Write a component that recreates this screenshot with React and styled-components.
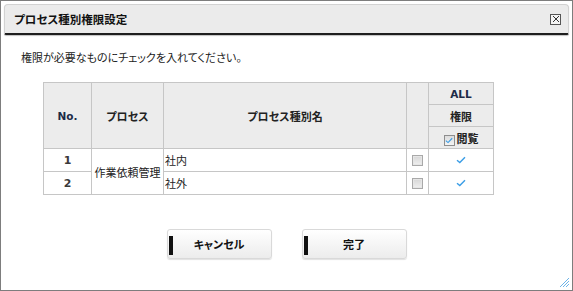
import React from "react"
import styled, { createGlobalStyle } from "styled-components"

const GlobalStyle = createGlobalStyle`
  html, body {
    margin: 0;
    padding: 0;
    background: #ffffff;
  }
  body {
    font-family: "Liberation Sans", "Noto Sans CJK JP", sans-serif;
    font-size: 11px;
    color: #222;
  }
`

const rows = [
  { no: 1, name: "社内" },
  { no: 2, name: "社外" },
]

const Check = () => (
  <svg width="10" height="8" viewBox="0 0 10 8">
    <path d="M1 4.2 L3.8 6.6 L9 1.2" fill="none" stroke="#3a9de6" strokeWidth="1.4" />
  </svg>
)

const App = () => {
  return (
    <>
      <GlobalStyle />
      <Window>
        <TitleBar>
          <Title>プロセス種別権限設定</Title>
          <CloseBox>
            <svg width="8" height="8" viewBox="0 0 8 8">
              <path d="M1 1 L7 7 M7 1 L1 7" stroke="#333" strokeWidth="1" />
            </svg>
          </CloseBox>
        </TitleBar>

        <Message>権限が必要なものにチェックを入れてください。</Message>

        <Table>
          <colgroup>
            <col style={{ width: 48 }} />
            <col style={{ width: 72 }} />
            <col style={{ width: 243 }} />
            <col style={{ width: 22 }} />
            <col style={{ width: 65 }} />
          </colgroup>
          <thead>
            <tr>
              <Th rowSpan={3} latin>No.</Th>
              <Th rowSpan={3}>プロセス</Th>
              <Th rowSpan={3}>プロセス種別名</Th>
              <Th rowSpan={3}></Th>
              <Th latin>ALL</Th>
            </tr>
            <tr>
              <Th>権限</Th>
            </tr>
            <tr>
              <Th>
                <HeadCheck>
                  <Check />
                </HeadCheck>
                閲覧
              </Th>
            </tr>
          </thead>
          <tbody>
            {rows.map((row, i) => (
              <tr key={row.no}>
                <Td center latin>{row.no}</Td>
                {i === 0 && <Td rowSpan={2} center>作業依頼管理</Td>}
                <Td>{row.name}</Td>
                <Td center>
                  <GrayBox />
                </Td>
                <Td center>
                  <Check />
                </Td>
              </tr>
            ))}
          </tbody>
        </Table>

        <Buttons>
          <Button>キャンセル</Button>
          <Button>完了</Button>
        </Buttons>

        <Grip>
          <svg width="11" height="11" viewBox="0 0 11 11">
            <path d="M1 10 L10 1 M4 10 L10 4 M7 10 L10 7" stroke="#6db4e8" strokeWidth="1" />
          </svg>
        </Grip>
      </Window>
    </>
  )
}

export default App

const Window = styled.div`
  position: relative;
  box-sizing: border-box;
  width: 573px;
  height: 291px;
  border: 1px solid #7d7d7d;
  background: #fff;
  padding: 3px 3px 0 3px;
`

const TitleBar = styled.div`
  display: flex;
  align-items: center;
  justify-content: space-between;
  box-sizing: border-box;
  height: 31px;
  padding: 0 7px 0 9px;
  background: #ebebeb;
  border: 1px solid #d2d2d2;
  border-bottom: 2px solid #1e1e1e;
  border-radius: 4px 4px 2px 2px;
  box-shadow: 0 1px 1px rgba(0, 0, 0, 0.25);
`

const Title = styled.div`
  font-family: "Noto Sans CJK JP", sans-serif;
  font-feature-settings: "palt";
  font-weight: bold;
  font-size: 11.5px;
  color: #111;
`

const CloseBox = styled.div`
  display: flex;
  align-items: center;
  justify-content: center;
  box-sizing: border-box;
  width: 11px;
  height: 11px;
  border: 1px solid #555;
  background: #f4f4f4;
`

const Message = styled.div`
  font-family: "Noto Sans CJK JP", sans-serif;
  font-feature-settings: "palt";
  font-size: 11px;
  color: #222;
  margin: 15px 0 0 17px;
  line-height: 14px;
`

const Table = styled.table`
  border-collapse: collapse;
  table-layout: fixed;
  width: 451px;
  margin: 18px 0 0 39px;
  border: 1px solid #c2c2c2;
`

const Th = styled.th`
  height: 21px;
  padding: 0;
  background: #ececec;
  border: 1px solid #c6c6c6;
  font-family: ${p => (p.latin ? "Tahoma, 'DejaVu Sans', sans-serif" : "'Noto Sans CJK JP', sans-serif")};
  font-feature-settings: "palt";
  font-weight: bold;
  font-size: ${p => (p.latin ? "10.5px" : "11px")};
  color: ${p => (p.latin ? "#1c2b47" : "#222")};
  text-align: center;
  vertical-align: middle;
  white-space: nowrap;
`

const Td = styled.td`
  height: 22px;
  padding: 0 1px;
  border: 1px solid #c6c6c6;
  font-family: ${p => (p.latin ? "Tahoma, 'DejaVu Sans', sans-serif" : "'Noto Sans CJK JP', sans-serif")};
  font-weight: ${p => (p.latin ? "bold" : "normal")};
  font-size: 11px;
  color: ${p => (p.latin ? "#3a3a3a" : "#222")};
  text-align: ${p => (p.center ? "center" : "left")};
  vertical-align: middle;
  white-space: nowrap;

  svg {
    display: block;
    margin: 0 auto;
  }
`

const HeadCheck = styled.span`
  display: inline-flex;
  align-items: center;
  justify-content: center;
  box-sizing: border-box;
  width: 11px;
  height: 11px;
  margin-right: 2px;
  vertical-align: -1px;
  border: 1px solid #8e8e8e;
  background: linear-gradient(#dcdcdc, #f4f4f4);

  svg {
    width: 8px;
    height: 7px;
  }
`

const GrayBox = styled.span`
  display: block;
  box-sizing: border-box;
  width: 11px;
  height: 11px;
  margin: 0 auto;
  border: 1px solid #a9a9a9;
  background: linear-gradient(#d6d6d6, #f0f0f0);
  box-shadow: inset 0 0 0 1px #e6e6e6;
`

const Buttons = styled.div`
  display: flex;
  justify-content: center;
  gap: 30px;
  margin-top: 34px;
`

const Button = styled.button`
  position: relative;
  box-sizing: border-box;
  width: 105px;
  height: 30px;
  border: 1px solid #d9d9d9;
  border-radius: 3px;
  background: linear-gradient(#ffffff, #ececec);
  box-shadow: 0 1px 1px rgba(0, 0, 0, 0.12);
  font-family: "Noto Sans CJK JP", sans-serif;
  font-feature-settings: "palt";
  font-weight: bold;
  font-size: 11px;
  color: #111;
  padding: 0;

  &::before {
    content: "";
    position: absolute;
    left: 1px;
    top: 6px;
    width: 4px;
    height: 19px;
    background: #111;
  }
`

const Grip = styled.div`
  position: absolute;
  right: 2px;
  bottom: 2px;
  line-height: 0;
`
